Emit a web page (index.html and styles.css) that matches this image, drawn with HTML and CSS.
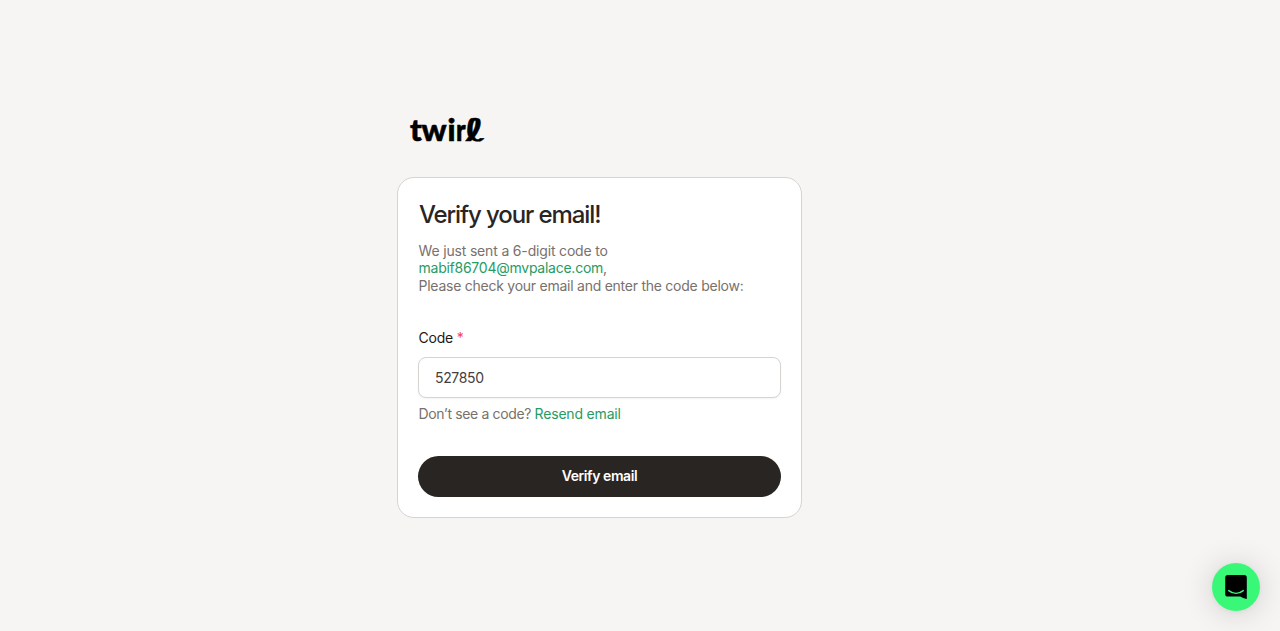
FILE: index.html
```html
<!DOCTYPE html>
<html lang="en">
<head>
<meta charset="utf-8">
<title>Verify your email</title>
<link rel="stylesheet" href="styles.css">
</head>
<body>
<main class="page">
  <svg class="logo" width="92" height="48" viewBox="0 0 92 48" role="img" aria-label="twirl">
    <text class="logo-text" x="1 12.5 38.4" y="34">twi</text>
    <text class="logo-text" transform="translate(47 34) scale(.82 1)">r</text>
    <text class="logo-loop" transform="translate(57 33.5) skewX(14) scale(1.55 1)">ℓ</text>
  </svg>
  <form class="card">
    <h1 class="title">Verify your email!</h1>
    <p class="intro"><span class="line line-sent">We just sent a 6-digit code to</span> <span class="line line-address"><span class="accent">mabif86704@mvpalace.com</span>,</span> <span class="line line-check">Please check your email and enter the code below:</span></p>
    <label class="label" for="code">Code <span class="required">*</span></label>
    <input class="input" id="code" type="text" value="527850">
    <p class="resend"><span class="question">Don’t see a code?</span> <a class="accent resend-link">Resend email</a></p>
    <button class="button" type="button">Verify email</button>
  </form>
</main>
<div class="chat">
  <svg width="22" height="25" viewBox="0 0 22 25" aria-hidden="true">
    <path d="M2.8 0H19.2A2.6 2.6 0 0 1 21.8 2.6V24C19 23.6 17 22.6 15.2 21.6H2.8A2.6 2.6 0 0 1 .2 19V2.6A2.6 2.6 0 0 1 2.8 0Z" fill="#000"/>
    <path d="M3.7 15.6Q11 21.2 18.3 15.6" fill="none" stroke="#39f878" stroke-width="1.4" stroke-linecap="round"/>
  </svg>
</div>
</body>
</html>
```
FILE: styles.css
```css
* { box-sizing: border-box; }
body {
  margin: 0;
  min-height: 631px;
  background: #f6f5f4;
  color: #78716c;
  font: 400 14px/17.5px Inter, "Liberation Sans", sans-serif;
}
.page {
  width: 405px;
  margin-left: 397px;
  padding-top: 107px;
}
.logo {
  display: block;
  margin: 0 0 22px 12px;
}
.logo-text { font: 900 31px Lato, sans-serif; stroke: #000; stroke-width: .6px; }
.logo-loop { font: 700 31px "DejaVu Sans", sans-serif; stroke: #000; stroke-width: .3px; }
.card {
  display: flex;
  flex-direction: column;
  height: 341px;
  padding: 20px;
  background: #fff;
  border: 1px solid #d6d3d1;
  border-radius: 17px;
}
.title {
  margin: 0 0 0 1px;
  color: #292524;
  font-size: 24px;
  font-weight: 500;
  line-height: 33px;
  letter-spacing: -1.1px;
}
.intro { margin: 11px 0 0 .5px; white-space: nowrap; }
.line { display: block; line-height: 17px; }
.line-sent { letter-spacing: -.17px; }
.line-address { letter-spacing: -.25px; }
.line-check { line-height: 19px; letter-spacing: -.25px; }
.accent { color: #269b63; }
.label {
  margin: 33.5px 0 0 .5px;
  color: #1c1917;
  line-height: 18px;
  letter-spacing: -.2px;
}
.required { color: #f43f5e; }
.input {
  width: 100%;
  height: 41px;
  margin-top: 10px;
  padding: 0 16px;
  background: #fff;
  border: 1px solid #d6d3d1;
  border-radius: 8px;
  box-shadow: 0 1px 2px rgba(0, 0, 0, .05);
  color: #44403c;
  font: inherit;
  letter-spacing: -.36px;
}
.resend { margin: 7px 0 0 .5px; letter-spacing: -.36px; }
.resend-link { letter-spacing: -.18px; }
.button {
  height: 41px;
  margin-top: auto;
  padding: 0 0 2px;
  background: #292522;
  border: 0;
  border-radius: 21px;
  color: #fff;
  font: 600 14px/20px Inter, sans-serif;
  letter-spacing: -.42px;
}
.chat {
  position: fixed;
  right: 20px;
  bottom: 20px;
  display: grid;
  place-items: center;
  width: 48px;
  height: 48px;
  border-radius: 50%;
  background: #39f878;
  box-shadow: 0 1px 6px rgba(0, 0, 0, .06), 0 2px 32px rgba(0, 0, 0, .16);
}
```
